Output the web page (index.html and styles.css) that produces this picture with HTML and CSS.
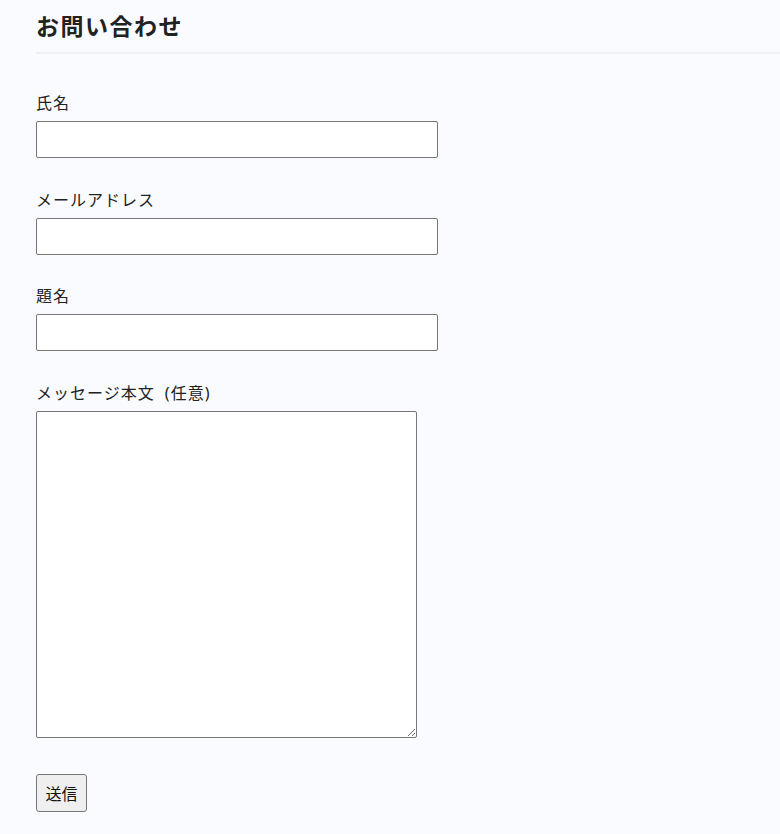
FILE: index.html
```html
<!DOCTYPE html>
<html lang="ja">
<head>
<meta charset="utf-8">
<title>お問い合わせ</title>
<link rel="stylesheet" href="styles.css">
</head>
<body>
<main class="page">
  <h1 class="title">お問い合わせ</h1>
  <form class="form">
    <div class="field">
      <label class="label" for="name">氏名</label>
      <input class="input" id="name" type="text">
    </div>
    <div class="field">
      <label class="label" for="email">メールアドレス</label>
      <input class="input" id="email" type="email">
    </div>
    <div class="field">
      <label class="label" for="subject">題名</label>
      <input class="input" id="subject" type="text">
    </div>
    <div class="field">
      <label class="label" for="message">メッセージ本文 (任意)</label>
      <textarea class="textarea" id="message"></textarea>
    </div>
    <div class="actions">
      <button class="button" type="submit">送信</button>
    </div>
  </form>
</main>
</body>
</html>
```
FILE: styles.css
```css
html, body {
  margin: 0;
  padding: 0;
  background: #fafbfe;
}
body {
  font-family: "Noto Sans CJK JP", "Noto Sans", sans-serif;
  color: #222;
}
.page {
  padding-left: 36px;
}
.title {
  margin: 0;
  padding: 9px 0 11px;
  font-size: 23px;
  line-height: 32px;
  letter-spacing: 1.5px;
  font-weight: 700;
  color: #222;
  border-bottom: 2px solid #eef0f5;
}
.form {
  padding-top: 37px;
}
.field {
  display: flex;
  flex-direction: column;
  align-items: flex-start;
  margin-bottom: 29.5px;
}
.label {
  font-family: "Noto Sans", "Noto Sans CJK JP", sans-serif;
  font-size: 16px;
  line-height: 24px;
  letter-spacing: 1px;
  word-spacing: 5px;
  margin-bottom: 6px;
  color: #222;
}
.input {
  box-sizing: border-box;
  width: 402px;
  height: 37px;
  border: 1px solid #767676;
  border-radius: 2px;
  background: #fff;
  padding: 0 4px;
  margin: 0;
  font-size: 16px;
}
.textarea {
  box-sizing: border-box;
  width: 381px;
  height: 327px;
  border: 1px solid #767676;
  border-radius: 2px;
  background: #fff;
  margin: 0;
  padding: 2px;
}
.actions {
  padding-top: 7px;
}
.button {
  box-sizing: border-box;
  width: 51px;
  height: 38px;
  font-family: "Noto Sans CJK JP", sans-serif;
  font-size: 16px;
  color: #111;
  background: #efefef;
  border: 1px solid #767676;
  border-radius: 3px;
  padding: 0;
}
```
